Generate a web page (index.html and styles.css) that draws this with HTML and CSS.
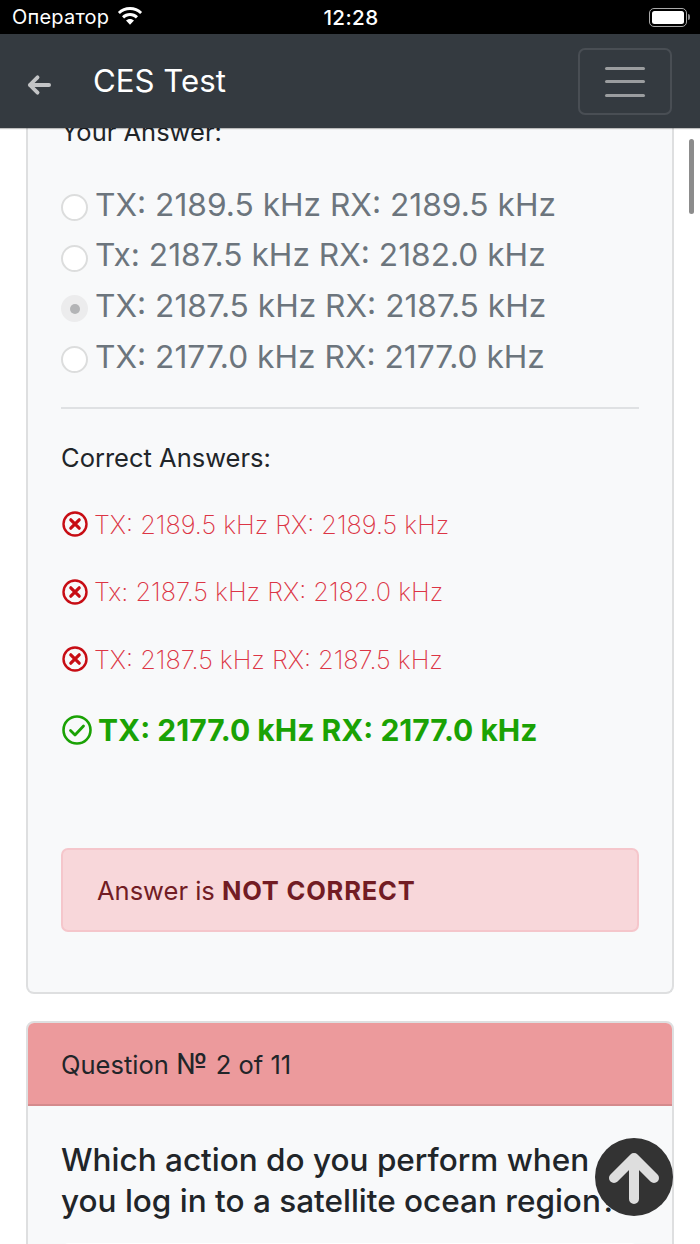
FILE: index.html
```html
<!DOCTYPE html>
<html lang="en">
<head>
<meta charset="utf-8">
<title>CES Test</title>
<link rel="stylesheet" href="styles.css">
</head>
<body>
<div class="status">
  <div class="status-left">
    <span>Оператор</span>
    <svg class="wifi" viewBox="0 0 26 18"><path d="M13 0C8.400 0 4.100 1.800 .9 4.900l2 2.100C5.600 4.400 9.200 2.900 13 2.900s7.400 1.500 10.100 4.100l2-2.100C21.900 1.800 17.600 0 13 0z"/><path d="M13 6C10 6 7.200 7.200 5 9.200l2.100 2.200c1.600-1.500 3.700-2.400 5.900-2.400s4.300.9 5.900 2.400L21 9.200C18.800 7.200 16 6 13 6z"/><path d="M13 11.900c-1.500 0-3 .6-4 1.600l4 4.300 4-4.300c-1-1-2.500-1.600-4-1.600z"/></svg>
  </div>
  <div class="clock">12:28</div>
  <div class="battery"><span class="battery-shell"><span class="battery-fill"></span></span><span class="battery-tip"></span></div>
</div>
<header class="navbar">
  <svg class="back" viewBox="0 0 26 22"><path d="M24 11H4M12 3l-8 8 8 8" fill="none" stroke="#c3c4c6" stroke-width="4" stroke-linecap="round" stroke-linejoin="round"/></svg>
  <h1 class="brand">CES Test</h1>
  <button class="toggler" type="button"><span></span><span></span><span></span></button>
</header>
<main class="content">
  <section class="card card-first">
    <div class="card-body">
      <p class="label clipped">Your Answer:</p>
      <div class="options">
        <div class="option"><span class="radio"></span><span>TX: 2189.5 kHz RX: 2189.5 kHz</span></div>
        <div class="option"><span class="radio"></span><span>Tx: 2187.5 kHz RX: 2182.0 kHz</span></div>
        <div class="option"><span class="radio checked"></span><span>TX: 2187.5 kHz RX: 2187.5 kHz</span></div>
        <div class="option"><span class="radio"></span><span>TX: 2177.0 kHz RX: 2177.0 kHz</span></div>
      </div>
      <hr class="rule">
      <p class="label">Correct Answers:</p>
      <div class="result wrong"><svg class="x-icon" viewBox="0 0 26 26"><circle cx="13" cy="13" r="11.500" fill="none" stroke="#c70d14" stroke-width="2.400"/><path d="M8.800 8.800l8.400 8.400M17.200 8.800l-8.400 8.400" stroke="#c70d14" stroke-width="3.200" stroke-linecap="round"/></svg><span>TX: 2189.5 kHz RX: 2189.5 kHz</span></div>
      <div class="result wrong"><svg class="x-icon" viewBox="0 0 26 26"><circle cx="13" cy="13" r="11.500" fill="none" stroke="#c70d14" stroke-width="2.400"/><path d="M8.800 8.800l8.400 8.400M17.200 8.800l-8.400 8.400" stroke="#c70d14" stroke-width="3.200" stroke-linecap="round"/></svg><span>Tx: 2187.5 kHz RX: 2182.0 kHz</span></div>
      <div class="result wrong"><svg class="x-icon" viewBox="0 0 26 26"><circle cx="13" cy="13" r="11.500" fill="none" stroke="#c70d14" stroke-width="2.400"/><path d="M8.800 8.800l8.400 8.400M17.200 8.800l-8.400 8.400" stroke="#c70d14" stroke-width="3.200" stroke-linecap="round"/></svg><span>TX: 2187.5 kHz RX: 2187.5 kHz</span></div>
      <div class="result right"><svg class="check-icon" viewBox="0 0 30 30"><circle cx="15" cy="15" r="13.500" fill="none" stroke="#1aa204" stroke-width="2.600"/><path d="M8.500 15.500l4.500 4.500 8.500-9" fill="none" stroke="#1aa204" stroke-width="2.800" stroke-linecap="round" stroke-linejoin="round"/></svg><span>TX: 2177.0 kHz RX: 2177.0 kHz</span></div>
      <div class="alert"><span>Answer is</span> <strong>NOT CORRECT</strong></div>
    </div>
  </section>
  <section class="card card-second">
    <div class="card-header"><span>Question <span class="numero">№</span> 2 of 11</span></div>
    <div class="card-body-q">
      <h2 class="question">Which action do you perform when you log in to a satellite ocean region?</h2>
      <div class="answer-stub"></div>
    </div>
  </section>
</main>
<div class="scrollbar"></div>
<button class="to-top" type="button"><svg viewBox="0 0 52 60"><path d="M26 52V13M6 31L26 11l20 20" fill="none" stroke="#dedede" stroke-width="10" stroke-linecap="round" stroke-linejoin="round"/></svg></button>
</body>
</html>
```
FILE: styles.css
```css
* { box-sizing: border-box; }
html, body { margin: 0; height: 1244px; overflow: hidden; }
body {
  position: relative;
  display: flex;
  flex-direction: column;
  background: #fff;
  color: #212529;
  font-family: Inter, "Liberation Sans", sans-serif;
  width: 700px;
}
.status {
  flex: none;
  height: 34px;
  background: #000;
  color: #fff;
  display: grid;
  grid-template-columns: 1fr auto 1fr;
  align-items: center;
  padding: 0 10px 0 12px;
  font-size: 20px;
}
.status-left { display: flex; align-items: center; gap: 8px; letter-spacing: .2px; }
.wifi { width: 26px; height: 18px; fill: #fff; margin-top: -2px; }
.clock { font-weight: 500; font-size: 20.6px; letter-spacing: .4px; }
.battery { display: flex; align-items: center; justify-content: flex-end; gap: 1px; }
.battery-shell { width: 38px; height: 19px; border: 1.5px solid #aaa; border-radius: 5px; padding: 2px; display: block; }
.battery-fill { display: block; height: 100%; background: #fff; border-radius: 2.5px; }
.battery-tip { width: 2px; height: 6px; background: #888; border-radius: 0 2px 2px 0; }
.navbar {
  flex: none;
  height: 94px;
  background: #343a40;
  display: flex;
  align-items: center;
  padding: 0 28px 0 26px;
  position: relative;
  z-index: 2;
  box-shadow: 0 1px 1px rgba(0,0,0,.25);
}
.back { width: 25px; height: 22px; margin-top: 8px; }
.brand { margin: 1px 0 0 42px; flex: 1; font-size: 31.2px; font-weight: 400; color: #fff; line-height: 1; }
.toggler {
  width: 94px; height: 67px;
  background: transparent;
  border: 2px solid #494e54;
  border-radius: 7px;
  display: flex; flex-direction: column; align-items: center; justify-content: center; gap: 10.5px;
  padding: 0;
  margin-top: 1px;
}
.toggler span { width: 40px; height: 3px; background: #9b9d9f; border-radius: 2px; }
.content { flex: 1; min-height: 0; overflow: hidden; padding: 0 26px; }
.card { background: #f8f9fa; border: 2px solid #dedfe0; border-radius: 8px; }
.card-first { border-top: 0; border-radius: 0 0 8px 8px; height: 881px; }
.card-body { padding: 0 33px; }
.label { margin: 0; font-size: 25.5px; line-height: 38px; }
.clipped { margin-top: -15px; }
.options { margin-top: 28px; display: flex; flex-direction: column; }
.option { display: flex; align-items: center; height: 50.6px; font-size: 31.7px; color: #6c757d; gap: 7px; }
.radio { width: 27px; height: 27px; border-radius: 50%; background: #fff; border: 2px solid #dcdddd; margin-top: 7px; position: relative; flex: none; }
.radio.checked { background: #ececed; border-color: #ececed; }
.radio.checked::after { content: ""; position: absolute; left: 6.500px; top: 6.500px; width: 10px; height: 10px; border-radius: 50%; background: #b3b4b6; }
.rule { border: 0; border-top: 2px solid #dfe1e3; margin: 26px 0 30px; }
.result { display: flex; align-items: center; }
.label + .result { margin-top: 13px; }
.wrong { height: 67.6px; font-size: 25.3px; font-weight: 200; color: #dc3545; gap: 6px; }
.x-icon { width: 26px; height: 26px; flex: none; margin-left: 1px; }
.right { height: 74px; font-size: 30px; font-weight: 700; color: #1aa204; gap: 6px; }
.check-icon { width: 30px; height: 30px; flex: none; margin-left: 1px; }
.alert {
  margin-top: 81px;
  height: 84px;
  background: #f8d7da;
  border: 2px solid #f5c6cb;
  border-radius: 7px;
  color: #721c24;
  font-size: 25.5px;
  display: flex; align-items: center; gap: .28em;
  padding: 0 34px;
}
.alert strong { font-weight: 700; letter-spacing: .8px; }
.card-second { margin-top: 27px; overflow: hidden; }
.card-header { height: 83px; background: #ec9a9c; border-bottom: 2px solid #d48a8c; padding: 0 33px; display: flex; align-items: center; font-size: 25.5px; }
.numero { font-size: 29px; letter-spacing: 1px; }
.card-body-q { padding: 33px 33px 0; }
.question { margin: 0; font-size: 31.5px; font-weight: 500; line-height: 41px; width: 560px; }
.answer-stub { margin-top: 22px; height: 40px; background: #fff; border-radius: 8px 8px 0 0; }
.scrollbar { position: absolute; left: 689px; top: 139px; width: 5px; height: 75px; border-radius: 3px; background: #8c8c8c; }
.to-top {
  position: absolute; left: 595px; top: 1138px;
  width: 78px; height: 78px; border-radius: 50%;
  background: #333; border: 0; padding: 0;
  display: flex; align-items: center; justify-content: center;
}
.to-top svg { width: 52px; height: 60px; }
```
